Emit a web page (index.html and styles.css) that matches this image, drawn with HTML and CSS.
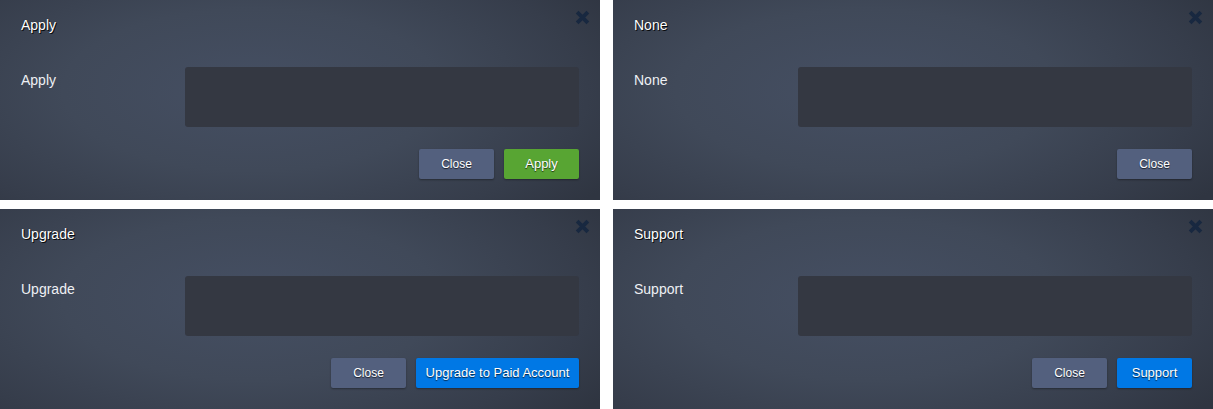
FILE: index.html
```html
<!DOCTYPE html>
<html>
<head>
<meta charset="utf-8">
<link rel="stylesheet" href="styles.css">
</head>
<body>
<div class="grid">
  <div class="panel">
    <svg class="x" viewBox="0 0 14 14"><path d="M2 2L12 12M12 2L2 12"/></svg>
    <div class="title">Apply</div>
    <div class="row"><div class="label">Apply</div><div class="field"></div></div>
    <div class="buttons"><div class="btn close">Close</div><div class="btn green">Apply</div></div>
  </div>
  <div class="panel">
    <svg class="x" viewBox="0 0 14 14"><path d="M2 2L12 12M12 2L2 12"/></svg>
    <div class="title">None</div>
    <div class="row"><div class="label">None</div><div class="field"></div></div>
    <div class="buttons"><div class="btn close">Close</div></div>
  </div>
  <div class="panel">
    <svg class="x" viewBox="0 0 14 14"><path d="M2 2L12 12M12 2L2 12"/></svg>
    <div class="title">Upgrade</div>
    <div class="row"><div class="label">Upgrade</div><div class="field"></div></div>
    <div class="buttons"><div class="btn close">Close</div><div class="btn blue wide">Upgrade to Paid Account</div></div>
  </div>
  <div class="panel">
    <svg class="x" viewBox="0 0 14 14"><path d="M2 2L12 12M12 2L2 12"/></svg>
    <div class="title">Support</div>
    <div class="row"><div class="label">Support</div><div class="field"></div></div>
    <div class="buttons"><div class="btn close">Close</div><div class="btn blue">Support</div></div>
  </div>
</div>
</body>
</html>
```
FILE: styles.css
```css
html, body {
  margin: 0;
  padding: 0;
  background: #ffffff;
}
.grid {
  display: grid;
  grid-template-columns: 600px 600px;
  grid-template-rows: 200px 200px;
  column-gap: 13px;
  row-gap: 9px;
  font-family: "Liberation Sans", Arial, sans-serif;
}
.panel {
  position: relative;
  box-sizing: border-box;
  padding: 17px 21px 21px 21px;
  background: radial-gradient(ellipse 70% 90% at 42% 45%, #454f63 0%, #404959 45%, #363d4b 80%, #2f3541 100%);
  display: flex;
  flex-direction: column;
}
.x {
  position: absolute;
  top: 10px;
  right: 10px;
  width: 15px;
  height: 15px;
}
.x path {
  stroke: #182840;
  stroke-width: 3.6;
  fill: none;
}
.title {
  font-size: 14px;
  line-height: 16px;
  color: #ffffff;
  text-shadow: 1px 1px 0 rgba(0,0,0,0.85), 0 0 1px rgba(0,0,0,0.6);
  height: 16px;
  margin-bottom: 34px;
}
.row {
  display: flex;
}
.label {
  width: 164px;
  font-size: 14px;
  line-height: 16px;
  color: #eef0f4;
  margin-top: 5px;
}
.field {
  width: 394px;
  height: 60px;
  background: #343842;
  border-radius: 3px;
}
.buttons {
  display: flex;
  justify-content: flex-end;
  gap: 10px;
  margin-top: 22px;
}
.btn {
  height: 30px;
  width: 75px;
  box-sizing: border-box;
  border-radius: 2px;
  color: #ffffff;
  font-size: 13px;
  line-height: 30px;
  text-align: center;
  text-shadow: 0 1px 1px rgba(0,0,0,0.7);
  box-shadow: 0 1px 2px rgba(0,0,0,0.35);
}
.close {
  background: #53607e;
  font-size: 12px;
}
.green {
  background: #58a533;
}
.blue {
  background: #0078e5;
}
.wide {
  width: 163px;
}
```
